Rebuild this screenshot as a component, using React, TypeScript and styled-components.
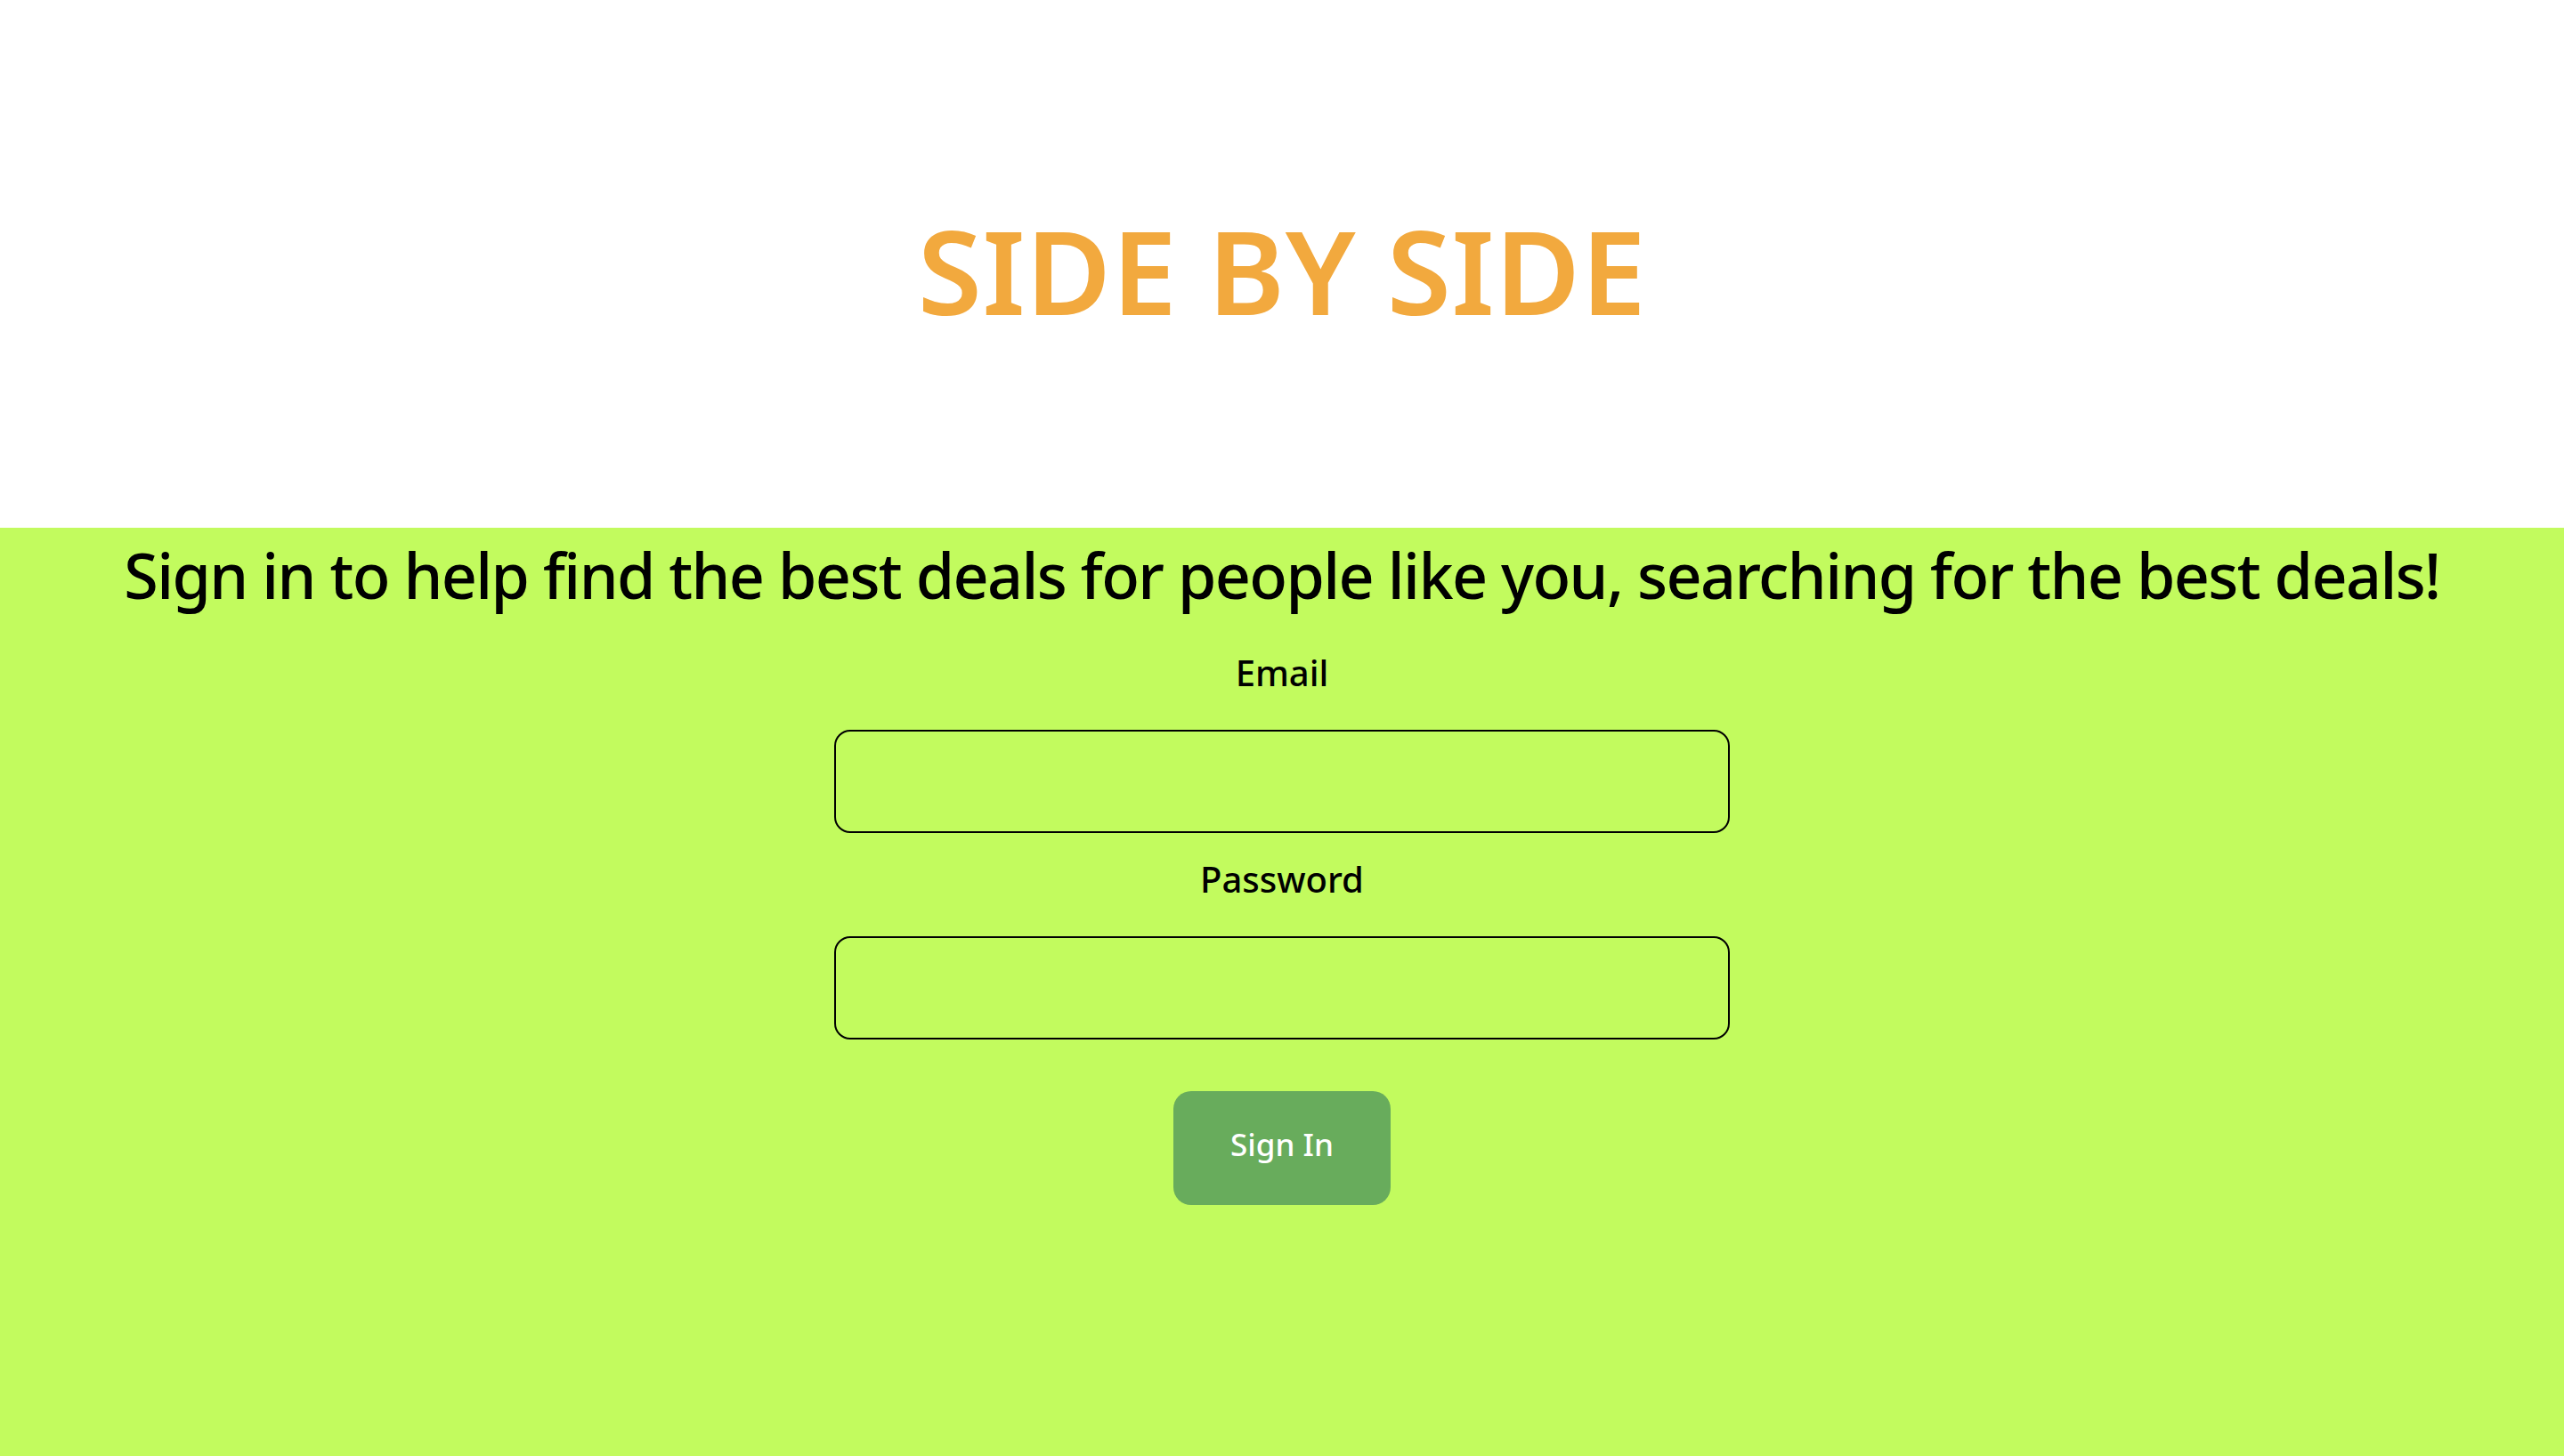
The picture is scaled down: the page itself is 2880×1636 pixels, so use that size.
import React from "react";
import styled, { createGlobalStyle } from "styled-components";

const GlobalStyle = createGlobalStyle`
  html, body {
    margin: 0;
    padding: 0;
    background: #ffffff;
  }
  body {
    font-family: "Noto Sans", "Open Sans", sans-serif;
  }
  #root {
    min-height: 100vh;
    display: flex;
    flex-direction: column;
  }
`;

const Header = styled.header`
  height: 593px;
  box-sizing: border-box;
  padding-top: 238px;
  display: flex;
  justify-content: center;
  background: #ffffff;
`;

const Title = styled.h1`
  margin: 0;
  font-family: "Noto Sans", sans-serif;
  font-weight: 600;
  font-size: 131px;
  line-height: 1;
  color: #f2a93e;
  letter-spacing: 0.5px;
`;

const Main = styled.main`
  flex: 1;
  background: #c2fb5e;
  display: flex;
  flex-direction: column;
  align-items: center;
  padding-top: 18px;
`;

const Lead = styled.h2`
  margin: 0;
  font-family: "Noto Sans", sans-serif;
  font-weight: 500;
  font-size: 70px;
  line-height: 1;
  color: #000000;
  white-space: nowrap;
  letter-spacing: -1.6px;
`;

const Form = styled.form`
  display: flex;
  flex-direction: column;
  align-items: center;
  margin-top: 55px;
`;

const Label = styled.label<{ $gap?: number }>`
  font-family: "Noto Sans", sans-serif;
  font-weight: 500;
  font-size: 40px;
  line-height: 1;
  color: #000000;
  margin-top: ${(p) => p.$gap ?? 0}px;
`;

const Input = styled.input`
  box-sizing: border-box;
  width: 1006px;
  height: 116px;
  margin-top: 44px;
  border: 2px solid #000000;
  border-radius: 18px;
  background: transparent;
  outline: none;
  font-family: "Noto Sans", sans-serif;
  font-size: 36px;
  padding: 0 24px;
`;

const Button = styled.button`
  box-sizing: border-box;
  width: 244px;
  height: 128px;
  margin-top: 58px;
  border: none;
  border-radius: 20px;
  background: #68ac5c;
  color: #ffffff;
  font-family: "Noto Sans", sans-serif;
  font-weight: 500;
  font-size: 35px;
  line-height: 1;
  cursor: pointer;
  padding: 0 0 10px;
`;

export default function App() {
  return (
    <>
      <GlobalStyle />
      <Header>
        <Title>SIDE BY SIDE</Title>
      </Header>
      <Main>
        <Lead>
          Sign in to help find the best deals for people like you, searching for the best deals!
        </Lead>
        <Form onSubmit={(e) => e.preventDefault()}>
          <Label htmlFor="email">Email</Label>
          <Input id="email" type="email" />
          <Label htmlFor="password" $gap={32}>
            Password
          </Label>
          <Input id="password" type="password" />
          <Button type="submit">Sign In</Button>
        </Form>
      </Main>
    </>
  );
}
